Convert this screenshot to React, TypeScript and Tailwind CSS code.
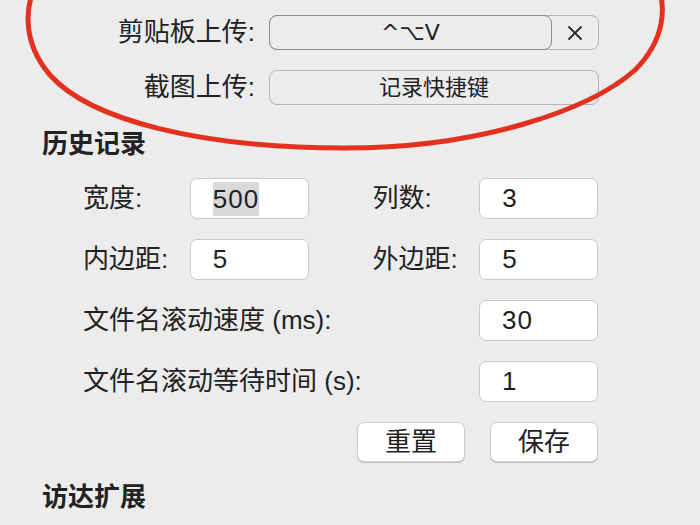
import React from "react";

const FONT = { fontFamily: '"Liberation Sans", "Noto Sans CJK SC", "DejaVu Sans", sans-serif' };

function Field({ value, selected }: { value: string; selected?: boolean }) {
  return (
    <div className="flex h-[41px] w-[119px] items-center rounded-[7px] border border-[#c9c9c9] bg-white pl-[22px] text-[26px] tracking-[1px] text-[#1f1f1f]">
      {selected ? <span className="bg-[#d9d9d9] leading-[34px]">{value}</span> : <span>{value}</span>}
    </div>
  );
}

function Btn({ label }: { label: string }) {
  return (
    <div className="flex h-[40px] w-[108px] items-center justify-center rounded-[7px] border border-[#cdcdcd] bg-white text-[26px] text-[#1f1f1f] shadow-[0_1px_1px_rgba(0,0,0,0.18)]">
      {label}
    </div>
  );
}

export default function App() {
  return (
    <div className="relative h-[525px] w-[700px] overflow-hidden bg-[#ececec] text-[#222]" style={FONT}>
      <div className="flex flex-col pt-[15px]">
        <div className="flex items-center">
          <div className="w-[255px] text-right text-[26px] leading-[35px]">剪贴板上传:</div>
          <div className="ml-[14px] flex h-[35px] w-[330px] rounded-[8px] border border-[#b3b3b3]">
            <div className="-my-px -ml-px flex flex-1 items-center justify-center rounded-[8px] border border-[#8c8c8c] text-[22px]" style={{ fontFamily: '"DejaVu Sans", "Liberation Sans", sans-serif' }}>
              ^⌥V
            </div>
            <div className="flex w-[46px] items-center justify-center">
              <svg width="16" height="16" viewBox="0 0 16 16">
                <path d="M2 2 L14 14 M14 2 L2 14" stroke="#2a2a2a" strokeWidth="1.8" strokeLinecap="round" />
              </svg>
            </div>
          </div>
        </div>
        <div className="mt-[20px] flex items-center">
          <div className="w-[255px] text-right text-[26px] leading-[35px]">截图上传:</div>
          <div className="ml-[14px] flex h-[35px] w-[330px] items-center justify-center rounded-[8px] border border-[#b3b3b3] text-[22px]">
            记录快捷键
          </div>
        </div>

        <div className="mt-[21px] pl-[42px] text-[26px] font-bold leading-[36px]">历史记录</div>

        <div className="mt-[16px] flex w-[598px] flex-col gap-[20px] pl-[83px]">
          <div className="flex items-center">
            <div className="w-[107px] text-[26px]">宽度:</div>
            <Field value="500" selected />
            <div className="ml-[64px] w-[107px] text-[26px]">列数:</div>
            <Field value="3" />
          </div>
          <div className="flex items-center">
            <div className="w-[107px] text-[26px]">内边距:</div>
            <Field value="5" />
            <div className="ml-[64px] w-[107px] text-[26px]">外边距:</div>
            <Field value="5" />
          </div>
          <div className="flex items-center justify-between">
            <div className="text-[26px]">文件名滚动速度 (ms):</div>
            <Field value="30" />
          </div>
          <div className="flex items-center justify-between">
            <div className="text-[26px]">文件名滚动等待时间 (s):</div>
            <Field value="1" />
          </div>
          <div className="flex justify-end gap-[25px]">
            <Btn label="重置" />
            <Btn label="保存" />
          </div>
        </div>

        <div className="mt-[17px] pl-[42px] text-[26px] font-bold leading-[36px]">访达扩展</div>
      </div>

      <svg className="pointer-events-none absolute left-0 top-0" width="700" height="525" viewBox="0 0 700 525">
        <path
          d="M 40,-20 C 25,0 20,40 50,75 C 90,120 200,148 345,148 C 480,148 590,110 635,70 C 665,40 668,5 655,-20"
          fill="none"
          stroke="#e2321f"
          strokeWidth="5"
          strokeLinecap="round"
        />
      </svg>
    </div>
  );
}
